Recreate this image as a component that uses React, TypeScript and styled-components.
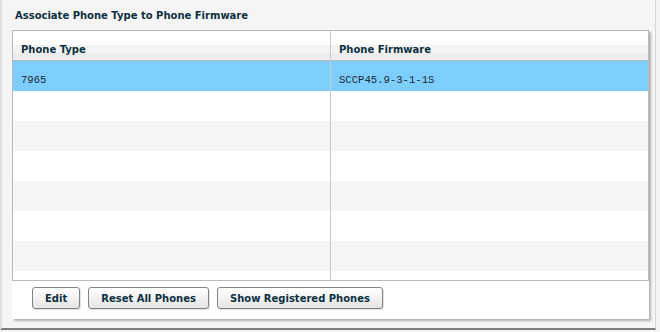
import * as React from 'react'
import styled, { createGlobalStyle } from 'styled-components'

const GlobalStyle = createGlobalStyle`
  html, body {
    margin: 0;
    padding: 0;
    background: #f3f3f3;
    font-family: "DejaVu Sans", Verdana, sans-serif;
  }
`

const Panel = styled.div`
  box-sizing: border-box;
  width: 656px;
  height: 330px;
  background: #f5f5f5;
  border-left: 2px solid #dedede;
  border-right: 1px solid #d6d6d6;
  border-bottom: 2px solid #7e7e7e;
  display: flex;
  flex-direction: column;
`

const Title = styled.div`
  height: 30px;
  box-sizing: border-box;
  padding: 10px 0 0 13px;
  font-size: 10px;
  font-weight: bold;
  color: #0c3040;
  line-height: 12px;
`

const Card = styled.div`
  margin-left: 10px;
  width: 637px;
  height: 289px;
  background: #fff;
  box-shadow: 2px 2px 2px rgba(0, 0, 0, 0.28);
  display: flex;
  flex-direction: column;
`

const Table = styled.div`
  box-sizing: border-box;
  height: 251px;
  border: 1px solid #b3bcbb;
  display: flex;
  flex-direction: column;
  overflow: hidden;
`

const Row = styled.div<{ $tone: 'head' | 'selected' | 'white' | 'gray' }>`
  flex: none;
  display: grid;
  grid-template-columns: 317px 1fr;
  height: ${p => (p.$tone === 'head' ? '29px' : '30px')};
  border-bottom: ${p => (p.$tone === 'head' ? '1px solid #b3bcbb' : 'none')};
  background: ${p =>
    p.$tone === 'head'
      ? 'linear-gradient(to bottom, #fff 0 14px, #f4f4f4 14px 22px, #ececec 22px)'
      : p.$tone === 'selected'
      ? '#7dcdfd'
      : p.$tone === 'gray'
      ? '#f5f5f5'
      : '#fff'};
`

const Cell = styled.div<{ $head?: boolean }>`
  box-sizing: border-box;
  display: flex;
  align-items: flex-end;
  padding: 0 0 ${p => (p.$head ? '4px' : '5px')} 8px;
  & + & {
    border-left: 1px solid #c8cccc;
  }
  font-family: ${p =>
    p.$head ? '"DejaVu Sans", Verdana, sans-serif' : '"Liberation Mono", monospace'};
  font-size: ${p => (p.$head ? '10px' : '10.6px')};
  font-weight: ${p => (p.$head ? 'bold' : 'normal')};
  color: ${p => (p.$head ? '#0c3040' : '#1b2a30')};
  line-height: 12px;
`

const ButtonBar = styled.div`
  display: flex;
  gap: 8px;
  padding: 6px 0 0 20px;
`

const Button = styled.button`
  box-sizing: border-box;
  height: 22px;
  padding: 0 12px;
  border: 1px solid #7f8484;
  border-radius: 3px;
  background: linear-gradient(to bottom, #ffffff, #e4e4e4);
  box-shadow: 1px 1px 0 rgba(0, 0, 0, 0.12);
  font-family: "DejaVu Sans", Verdana, sans-serif;
  font-size: 10px;
  font-weight: bold;
  color: #0c3040;
  cursor: pointer;
`

interface Mapping {
  phoneType: string
  firmware: string
}

const mappings: Mapping[] = [{ phoneType: '7965', firmware: 'SCCP45.9-3-1-1S' }]

const App: React.FC = () => {
  const rows = Array.from({ length: 8 }, (_, i) => mappings[i])
  return (
    <>
      <GlobalStyle />
      <Panel>
        <Title>Associate Phone Type to Phone Firmware</Title>
        <Card>
          <Table>
            <Row $tone="head">
              <Cell $head>Phone Type</Cell>
              <Cell $head>Phone Firmware</Cell>
            </Row>
            {rows.map((m, i) => (
              <Row key={i} $tone={i === 0 ? 'selected' : i % 2 === 0 ? 'gray' : 'white'}>
                <Cell>{m ? m.phoneType : ''}</Cell>
                <Cell>{m ? m.firmware : ''}</Cell>
              </Row>
            ))}
          </Table>
          <ButtonBar>
            <Button>Edit</Button>
            <Button>Reset All Phones</Button>
            <Button>Show Registered Phones</Button>
          </ButtonBar>
        </Card>
      </Panel>
    </>
  )
}

export default App
